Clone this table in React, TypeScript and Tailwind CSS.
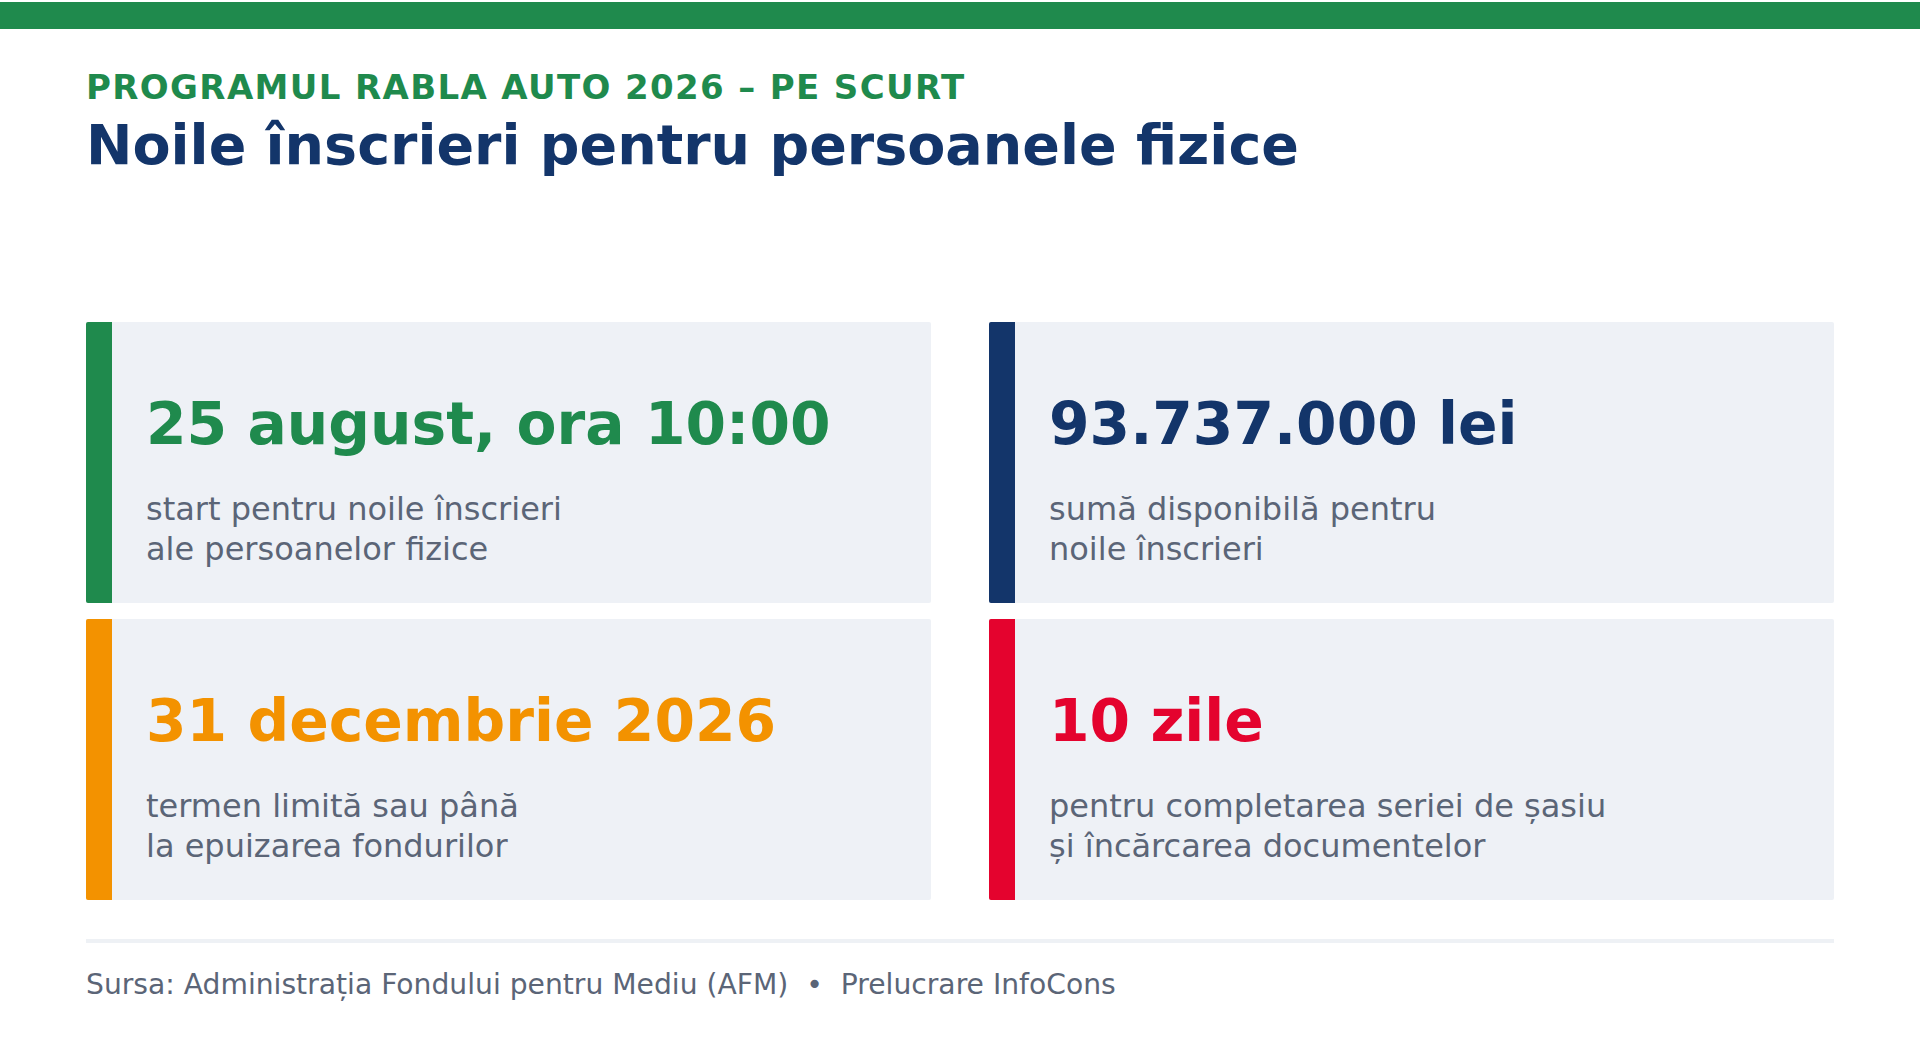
import React from 'react';

interface Fact {
  id: string;
  value: string;
  lines: string[];
  accent: string;
  valueColor: string;
}

const facts: Fact[] = [
  {
    id: 'start',
    value: '25 august, ora 10:00',
    lines: ['start pentru noile înscrieri', 'ale persoanelor fizice'],
    accent: 'bg-[#1f8a4d]',
    valueColor: 'text-[#1f8a4d]',
  },
  {
    id: 'suma',
    value: '93.737.000 lei',
    lines: ['sumă disponibilă pentru', 'noile înscrieri'],
    accent: 'bg-[#13356a]',
    valueColor: 'text-[#13356a]',
  },
  {
    id: 'termen',
    value: '31 decembrie 2026',
    lines: ['termen limită sau până', 'la epuizarea fondurilor'],
    accent: 'bg-[#f39200]',
    valueColor: 'text-[#f39200]',
  },
  {
    id: 'zile',
    value: '10 zile',
    lines: ['pentru completarea seriei de șasiu', 'și încărcarea documentelor'],
    accent: 'bg-[#e4032e]',
    valueColor: 'text-[#e4032e]',
  },
];

const FactCard = ({ fact }: { fact: Fact }) => (
  <div className="flex h-[281px] overflow-hidden rounded-[2px] bg-[#eef1f6]">
    {/* Accent strip */}
    <div className={`w-[26px] shrink-0 ${fact.accent}`} />

    {/* Content */}
    <div className="flex flex-col pl-[34px] pt-[73px]">
      <p className={`text-[58.3px] font-bold leading-none ${fact.valueColor}`}>{fact.value}</p>
      <p className="mt-[36px] text-[32px] leading-[40px] text-[#5b6577]">
        {fact.lines.map((line) => (
          <span key={line} className="block">
            {line}
          </span>
        ))}
      </p>
    </div>
  </div>
);

const App = () => {
  return (
    <div className="min-h-[1040px] w-[1920px] bg-white font-['DejaVu_Sans',sans-serif]">
      {/* Top bar */}
      <div className="pt-[2px]">
        <div className="h-[27px] bg-[#1f8a4d]" />
      </div>

      <div className="px-[86px]">
        {/* Header */}
        <header className="pt-[41px]">
          <p className="text-[34px] font-bold leading-none tracking-[0.04em] text-[#1f8a4d]">
            PROGRAMUL RABLA AUTO 2026 – PE SCURT
          </p>
          <h1 className="mt-[13px] text-[55.5px] font-bold leading-none text-[#13356a]">
            Noile înscrieri pentru persoanele fizice
          </h1>
        </header>

        {/* Facts */}
        <div className="mt-[149px] grid grid-cols-2 gap-x-[58px] gap-y-[16px]">
          {facts.map((fact) => (
            <FactCard key={fact.id} fact={fact} />
          ))}
        </div>

        {/* Footer */}
        <div className="mt-[39px] h-[4px] bg-[#eef1f5]" />
        <p className="mt-[28px] text-[28.2px] leading-none text-[#5b6577]">
          Sursa: Administrația Fondului pentru Mediu (AFM)&nbsp; • &nbsp;Prelucrare InfoCons
        </p>
      </div>
    </div>
  );
};

export default App;
